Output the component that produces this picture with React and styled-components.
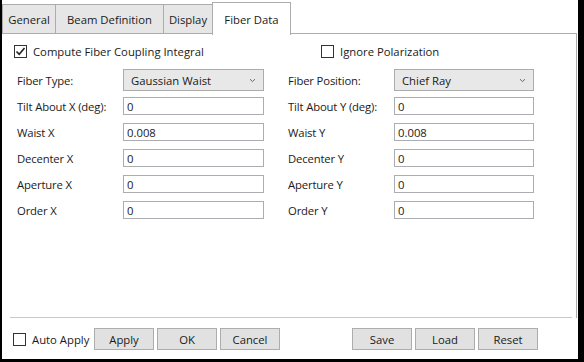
import React from "react";
import styled, { createGlobalStyle } from "styled-components";

const Global = createGlobalStyle`
  html, body { margin: 0; padding: 0; background: #000; }
  body { width: 584px; height: 362px; overflow: hidden; font-family: "Open Sans", "Noto Sans", sans-serif; font-size: 11.3px; color: #1a1a1a; }
  * { box-sizing: border-box; }
`;

const Window = styled.div`
  margin-left: 2px;
  width: 576px;
  height: 359px;
  background: #fff;
  display: flex;
  flex-direction: column;
`;

const TabStrip = styled.div`
  height: 34px;
  display: flex;
  align-items: flex-end;
`;

const Tab = styled.div`
  position: relative;
  width: ${(p) => p.$w}px;
  height: ${(p) => (p.$active ? 33 : 30)}px;
  margin-right: -1px;
  margin-bottom: ${(p) => (p.$active ? -1 : 0)}px;
  z-index: ${(p) => (p.$active ? 2 : 1)};
  display: flex;
  align-items: center;
  justify-content: center;
  background: ${(p) => (p.$active ? "#fff" : "#e6e6e6")};
  border: 1px solid #acacac;
  border-bottom: ${(p) => (p.$active ? "none" : "1px solid #acacac")};
  white-space: nowrap;
`;

const Panel = styled.div`
  flex: 1;
  margin-top: -1px;
  margin-right: 1px;
  border-top: 1px solid #acacac;
  border-right: 1px solid #acacac;
  display: flex;
  flex-direction: column;
`;

const CheckRow = styled.div`
  display: flex;
  align-items: center;
  height: 13px;
  margin-top: 11px;
  padding-left: 12px;
`;

const CheckItem = styled.label`
  display: flex;
  align-items: center;
  gap: 6px;
  width: ${(p) => p.$w || "auto"};
  white-space: nowrap;
`;

const Box = styled.span`
  width: 13px;
  height: 13px;
  border: 1px solid #333;
  background: #fff;
  display: flex;
  align-items: center;
  justify-content: center;
  flex: none;
`;

const Columns = styled.div`
  display: grid;
  grid-template-columns: 247px 246px;
  column-gap: 24px;
  padding-left: 15px;
  margin-top: 11px;
`;

const Column = styled.div`
  display: grid;
  grid-template-columns: 106px 1fr;
  grid-template-rows: 22px;
  grid-auto-rows: 20px;
  row-gap: 6px;
  align-items: start;
`;

const Label = styled.div`
  white-space: nowrap;
  letter-spacing: -0.15px;
  height: ${(p) => (p.$combo ? 22 : 18)}px;
  display: flex;
  align-items: center;
`;

const Combo = styled.div`
  height: 22px;
  border: 1px solid #acacac;
  background: #e8e8e8;
  display: flex;
  align-items: center;
  justify-content: space-between;
  padding: 0 7px;
`;

const Input = styled.div`
  height: 18px;
  border: 1px solid #abadb3;
  background: #fff;
  display: flex;
  align-items: center;
  padding-left: 3px;
`;

const Spacer = styled.div`
  flex: 1;
`;

const Separator = styled.div`
  height: 1px;
  background: #c8c8c8;
  margin: 0 4px 0 8px;
`;

const Footer = styled.div`
  display: flex;
  align-items: center;
  height: 41px;
  padding-left: 11px;
  padding-right: 40px;
  padding-top: 1px;
`;

const ButtonGroup = styled.div`
  display: flex;
  gap: 3px;
  margin-left: ${(p) => (p.$right ? "auto" : "0")};
`;

const Button = styled.div`
  width: 60px;
  height: 22px;
  background: #e1e1e1;
  border: 1px solid #adadad;
  display: flex;
  align-items: center;
  justify-content: center;
`;

const Check = ({ checked }) => (
  <Box>
    {checked && (
      <svg width="11" height="11" viewBox="0 0 11 11">
        <path d="M1.5 5.5 L4.2 8.3 L9.5 2" fill="none" stroke="#222" strokeWidth="1.6" />
      </svg>
    )}
  </Box>
);

const Chevron = () => (
  <svg width="7" height="5" viewBox="0 0 7 5">
    <path d="M1 1.2 L3.5 3.6 L6 1.2" fill="none" stroke="#666" strokeWidth="1" />
  </svg>
);

const left = [
  ["Tilt About X (deg):", "0"],
  ["Waist X", "0.008"],
  ["Decenter X", "0"],
  ["Aperture X", "0"],
  ["Order X", "0"],
];
const right = [
  ["Tilt About Y (deg):", "0"],
  ["Waist Y", "0.008"],
  ["Decenter Y", "0"],
  ["Aperture Y", "0"],
  ["Order Y", "0"],
];

const FieldColumn = ({ comboLabel, comboValue, rows }) => (
  <Column>
    <Label $combo>{comboLabel}</Label>
    <Combo>
      <span>{comboValue}</span>
      <Chevron />
    </Combo>
    {rows.map(([l, v]) => (
      <React.Fragment key={l}>
        <Label>{l}</Label>
        <Input>{v}</Input>
      </React.Fragment>
    ))}
  </Column>
);

export default function App() {
  return (
    <>
      <Global />
      <Window>
        <TabStrip>
          <Tab $w={54}>General</Tab>
          <Tab $w={109}>Beam Definition</Tab>
          <Tab $w={50}>Display</Tab>
          <Tab $w={79} $active>Fiber Data</Tab>
        </TabStrip>
        <Panel>
          <CheckRow>
            <CheckItem $w="307px">
              <Check checked />
              Compute Fiber Coupling Integral
            </CheckItem>
            <CheckItem>
              <Check />
              Ignore Polarization
            </CheckItem>
          </CheckRow>
          <Columns>
            <FieldColumn comboLabel="Fiber Type:" comboValue="Gaussian Waist" rows={left} />
            <FieldColumn comboLabel="Fiber Position:" comboValue="Chief Ray" rows={right} />
          </Columns>
          <Spacer />
          <Separator />
        </Panel>
        <Footer>
          <CheckItem $w="81px">
            <Check />
            Auto Apply
          </CheckItem>
          <ButtonGroup>
            <Button>Apply</Button>
            <Button>OK</Button>
            <Button>Cancel</Button>
          </ButtonGroup>
          <ButtonGroup $right>
            <Button>Save</Button>
            <Button>Load</Button>
            <Button>Reset</Button>
          </ButtonGroup>
        </Footer>
      </Window>
    </>
  );
}
